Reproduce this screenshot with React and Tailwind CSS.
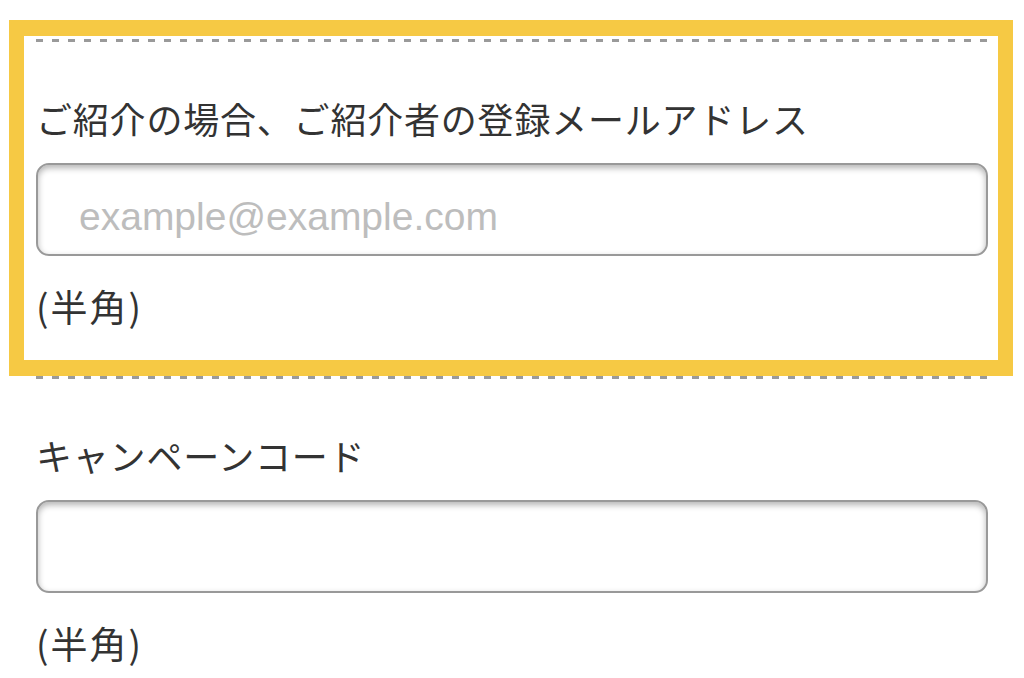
import React from "react";

const Dashes = () => (
  <div className="h-[3px] w-full bg-[repeating-linear-gradient(to_right,#9a9a9a_0_7px,transparent_7px_16px)]" />
);

const Field = ({ label, placeholder }) => (
  <section>
    <Dashes />
    <div className="pt-[52px] pb-[46px]">
      <label className="block text-[36px] leading-[48px] tracking-[0.8px] text-[#333333] font-['Noto_Sans_CJK_JP',sans-serif]">
        {label}
      </label>
      <input
        type="text"
        placeholder={placeholder}
        className="mt-[21px] block h-[93px] w-full rounded-[13px] border-2 border-[#999999] bg-white px-[41px] pt-[14px] text-[39px] text-[#333333] shadow-[inset_0_3px_6px_rgba(0,0,0,0.3)] outline-none placeholder:text-[#bdbdbd] font-['Liberation_Sans',sans-serif]"
      />
      <p className="mt-[26px] text-[37px] leading-[48px] tracking-[2px] text-[#333333] font-['Noto_Sans_CJK_JP',sans-serif]">
        (半角)
      </p>
    </div>
  </section>
);

export default function App() {
  return (
    <div className="relative h-[678px] w-[1024px] overflow-hidden bg-white">
      <div className="flex flex-col pl-[36px] pr-[36px] pt-[39px]">
        <Field
          label="ご紹介の場合、ご紹介者の登録メールアドレス"
          placeholder="example@example.com"
        />
        <Field label="キャンペーンコード" placeholder="" />
      </div>
      {/* highlight frame drawn over the first field */}
      <div className="pointer-events-none absolute left-[9px] top-[20px] h-[356px] w-[1004px] border-x-[15px] border-y-[16px] border-[#f6c944]" />
    </div>
  );
}
